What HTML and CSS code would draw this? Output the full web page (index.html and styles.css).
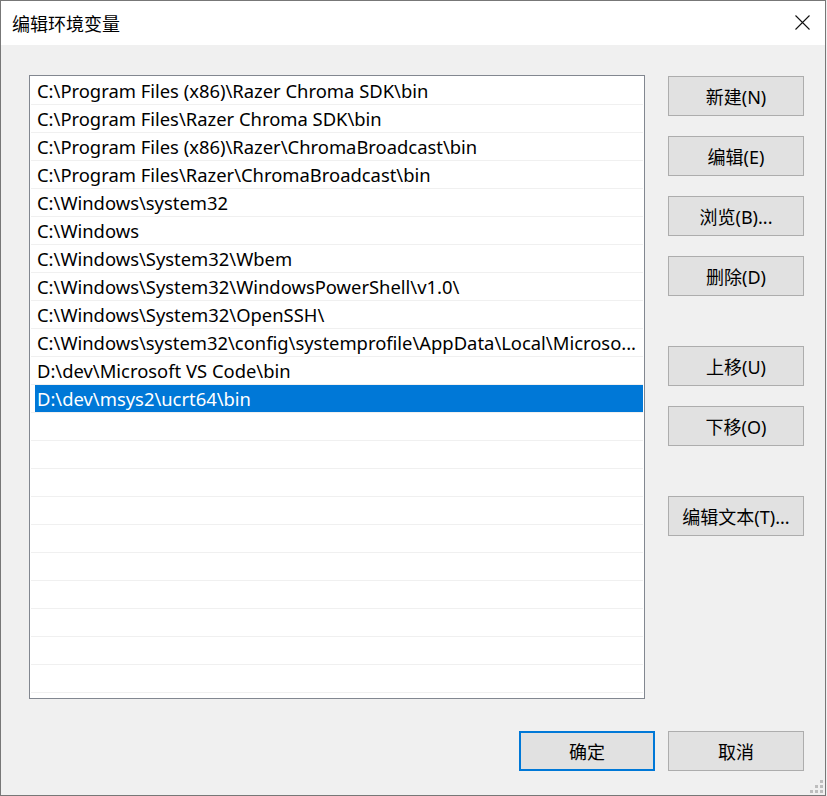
FILE: index.html
```html
<!DOCTYPE html>
<html lang="zh-CN">
<head>
    <meta charset="UTF-8">
    <title>编辑环境变量</title>
    <link rel="stylesheet" href="styles.css">
</head>
<body>
    <div class="window">
        <div class="titlebar">
            <span class="title">编辑环境变量</span>
            <svg class="close" width="15" height="15" viewBox="0 0 15 15">
                <path d="M0.5 0.5 L14.5 14.5 M14.5 0.5 L0.5 14.5" stroke="#111" stroke-width="1.1" fill="none"/>
            </svg>
        </div>

        <div class="content">
            <div class="list">
                <div class="row"><div class="cell">C:\Program Files (x86)\Razer Chroma SDK\bin</div></div>
                <div class="row"><div class="cell">C:\Program Files\Razer Chroma SDK\bin</div></div>
                <div class="row"><div class="cell">C:\Program Files (x86)\Razer\ChromaBroadcast\bin</div></div>
                <div class="row"><div class="cell">C:\Program Files\Razer\ChromaBroadcast\bin</div></div>
                <div class="row"><div class="cell">C:\Windows\system32</div></div>
                <div class="row"><div class="cell">C:\Windows</div></div>
                <div class="row"><div class="cell">C:\Windows\System32\Wbem</div></div>
                <div class="row"><div class="cell">C:\Windows\System32\WindowsPowerShell\v1.0\</div></div>
                <div class="row"><div class="cell">C:\Windows\System32\OpenSSH\</div></div>
                <div class="row"><div class="cell">C:\Windows\system32\config\systemprofile\AppData\Local\Microso...</div></div>
                <div class="row"><div class="cell">D:\dev\Microsoft VS Code\bin</div></div>
                <div class="row selected"><div class="cell">D:\dev\msys2\ucrt64\bin</div></div>
                <div class="row"><div class="cell"></div></div>
                <div class="row"><div class="cell"></div></div>
                <div class="row"><div class="cell"></div></div>
                <div class="row"><div class="cell"></div></div>
                <div class="row"><div class="cell"></div></div>
                <div class="row"><div class="cell"></div></div>
                <div class="row"><div class="cell"></div></div>
                <div class="row"><div class="cell"></div></div>
                <div class="row"><div class="cell"></div></div>
                <div class="row"><div class="cell"></div></div>
                <div class="row"><div class="cell"></div></div>
            </div>

            <div class="side">
                <div class="group">
                    <button class="btn">新建(N)</button>
                    <button class="btn">编辑(E)</button>
                    <button class="btn">浏览(B)...</button>
                    <button class="btn">删除(D)</button>
                </div>
                <div class="group">
                    <button class="btn">上移(U)</button>
                    <button class="btn">下移(O)</button>
                </div>
                <div class="group">
                    <button class="btn">编辑文本(T)...</button>
                </div>
            </div>
        </div>

        <div class="footer">
            <button class="btn default">确定</button>
            <button class="btn">取消</button>
        </div>

        <svg class="grip" width="13" height="13" viewBox="0 0 13 13">
            <rect x="10" y="0" width="3" height="3" fill="#bdbdbd"/>
            <rect x="5" y="5" width="3" height="3" fill="#bdbdbd"/>
            <rect x="10" y="5" width="3" height="3" fill="#bdbdbd"/>
            <rect x="0" y="10" width="3" height="3" fill="#bdbdbd"/>
            <rect x="5" y="10" width="3" height="3" fill="#bdbdbd"/>
            <rect x="10" y="10" width="3" height="3" fill="#bdbdbd"/>
        </svg>
    </div>
</body>
</html>
```

FILE: styles.css
```css
body {
    margin: 0;
    background: #f0f0f0;
    font-family: "Noto Sans", "Noto Sans CJK SC", sans-serif;
    font-size: 18px;
    color: #000;
}
.window {
    position: relative;
    width: 826px;
    height: 796px;
    box-sizing: border-box;
    border: 1px solid #777;
    background: #f0f0f0;
    display: flex;
    flex-direction: column;
}
.titlebar {
    height: 44px;
    background: #fff;
    display: flex;
    align-items: center;
    justify-content: space-between;
    padding: 0 15px 0 11px;
}
.title {
    font-family: "Noto Sans CJK SC", sans-serif;
    font-size: 18px;
    line-height: 1;
}
.close {
    display: block;
    margin-top: -1px;
}
.content {
    display: flex;
    padding: 30px 21px 0 28px;
    gap: 23px;
}
.list {
    width: 616px;
    height: 624px;
    box-sizing: border-box;
    border: 1px solid #828790;
    background: #fff;
    padding-top: 1px;
    overflow: hidden;
}
.row {
    margin: 0 1px;
    padding-left: 4px;
    border-bottom: 1px solid #f0f0f0;
}
.cell {
    height: 26px;
    padding-top: 1px;
    line-height: 26px;
    padding-left: 2px;
    font-size: 18.4px;
    white-space: nowrap;
    overflow: hidden;
}
.row.selected .cell {
    background: #0078d7;
    color: #fff;
}
.side {
    display: flex;
    flex-direction: column;
    gap: 50px;
    margin-top: 1px;
}
.group {
    display: flex;
    flex-direction: column;
    gap: 20px;
}
.btn {
    width: 136px;
    height: 40px;
    box-sizing: border-box;
    background: #e1e1e1;
    border: 1px solid #adadad;
    font-family: "Noto Sans", "Noto Sans CJK SC", sans-serif;
    font-size: 18px;
    color: #000;
    padding: 0;
}
.btn.default {
    border: 2px solid #0078d7;
}
.footer {
    display: flex;
    justify-content: flex-end;
    gap: 13px;
    padding: 32px 21px 0 0;
}
.grip {
    position: absolute;
    right: 2px;
    bottom: 2px;
}
```
